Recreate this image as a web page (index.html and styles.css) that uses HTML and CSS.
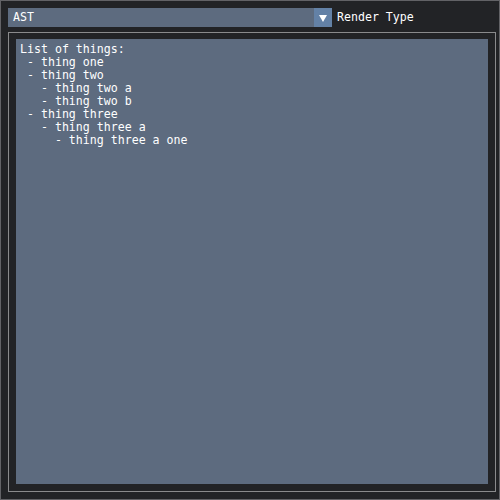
FILE: index.html
```html
<!DOCTYPE html>
<html>
<head>
<meta charset="utf-8">
<link rel="stylesheet" href="styles.css">
</head>
<body>
<div class="window">
  <div class="toolbar">
    <div class="combo">
      <span class="combo-value">AST</span>
      <span class="combo-arrow"><svg width="8" height="8" viewBox="0 0 8 8"><polygon points="0,1 8,1 4,8" fill="#ffffff"/></svg></span>
    </div>
    <span class="label">Render Type</span>
  </div>
  <div class="child">
    <pre class="content">List of things:
 - thing one
 - thing two
   - thing two a
   - thing two b
 - thing three
   - thing three a
     - thing three a one</pre>
  </div>
</div>
</body>
</html>
```
FILE: styles.css
```css
html, body {
  margin: 0;
  padding: 0;
  background: #222326;
}
.window {
  width: 500px;
  height: 500px;
  box-sizing: border-box;
  border: 1px solid #626266;
  padding: 7px 3px 7px 7px;
  background: #222326;
  font-family: "DejaVu Sans Mono", "Liberation Mono", monospace;
  font-size: 11.6px;
  color: #ffffff;
}
.toolbar {
  display: flex;
  align-items: center;
  height: 19px;
  gap: 5px;
}
.combo {
  width: 324px;
  height: 19px;
  display: flex;
  background: #5d6b7f;
}
.combo-value {
  flex: 1;
  padding-left: 5px;
  line-height: 19px;
}
.combo-arrow {
  width: 18px;
  height: 19px;
  background: #6381a6;
  display: flex;
  align-items: center;
  justify-content: center;
}
.label {
  line-height: 19px;
}
.child {
  margin-top: 5px;
  height: 460px;
  box-sizing: border-box;
  border: 1px solid #8a8a8c;
  padding: 6px 7px 7px 7px;
}
.content {
  margin: 0;
  height: 100%;
  box-sizing: border-box;
  background: #5d6b7f;
  padding: 4px 4px;
  font-family: inherit;
  font-size: inherit;
  line-height: 13px;
  white-space: pre;
  color: #ffffff;
}
```
